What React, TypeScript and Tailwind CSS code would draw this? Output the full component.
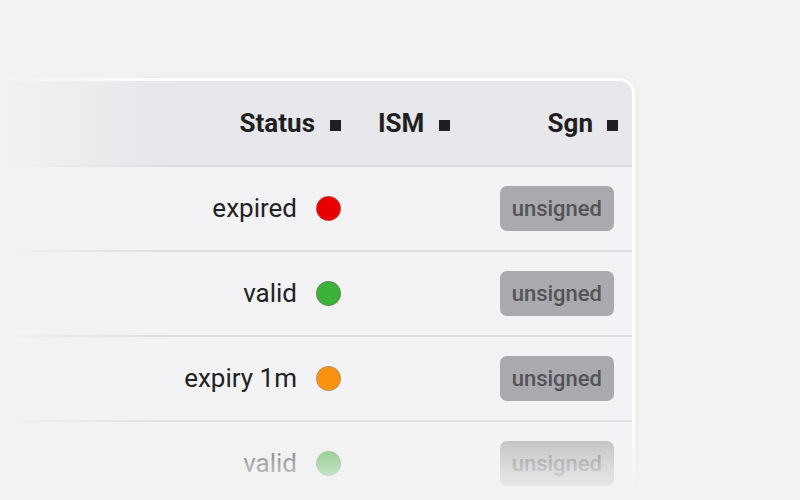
import React from 'react';

const rows = [
  { status: 'expired', dot: 'bg-[#e80000]', ring: 'ring-[#c24a4a]' },
  { status: 'valid', dot: 'bg-[#3bb13a]', ring: 'ring-[#5a8f55]' },
  { status: 'expiry 1m', dot: 'bg-[#fa9010]', ring: 'ring-[#b8926a]' },
  { status: 'valid', dot: 'bg-[#3bb13a]', ring: 'ring-[#5a8f55]' },
];

function SortMark() {
  return <span className="inline-block w-[11px] h-[11px] bg-[#1f1f22] mt-[4px]" />;
}

export default function App() {
  return (
    <div
      className="relative w-[800px] h-[500px] overflow-hidden bg-[#f2f2f2] pt-[78px]"
      style={{ fontFamily: 'Roboto, "Liberation Sans", sans-serif' }}
    >
      <div className="w-[635px] border-t-[3px] border-r-[3px] border-white rounded-tr-[16px] overflow-hidden shadow-[0_0_12px_rgba(0,0,0,0.03)]">
        <div className="grid grid-cols-[352px_108px_172px] h-[86px] bg-[#e7e7ec] border-b-2 border-[#dcdce0] items-center text-[26px] font-bold text-[#1f1f22]">
          <div className="flex items-center justify-end gap-[15px] pr-[11px]">
            <span>Status</span>
            <SortMark />
          </div>
          <div className="flex items-center gap-[15px] pl-[26px]">
            <span>ISM</span>
            <SortMark />
          </div>
          <div className="flex items-center justify-end gap-[14px] pr-[14px]">
            <span>Sgn</span>
            <SortMark />
          </div>
        </div>
        {rows.map((r, i) => (
          <div
            key={i}
            className="grid grid-cols-[352px_108px_172px] h-[85px] bg-[#f3f3f6] border-b-2 border-[#dcdce0] items-center"
          >
            <div className="flex items-center justify-end gap-[20px] pr-[12px] text-[26px] text-[#222225]">
              <span>{r.status}</span>
              <span className={`w-[23px] h-[23px] rounded-full ring-1 ${r.dot} ${r.ring}`} />
            </div>
            <div />
            <div className="flex justify-end pr-[18px]">
              <span className="h-[45px] px-[12px] flex items-center rounded-[7px] bg-[#a9a9ae] text-[22px] font-medium text-[#535358]">
                unsigned
              </span>
            </div>
          </div>
        ))}
      </div>
      <div className="absolute left-0 top-0 bottom-0 w-[170px] bg-gradient-to-r from-[#f2f2f2] via-[#f2f2f2]/50 to-transparent" />
      <div className="absolute left-0 right-0 bottom-0 h-[90px] bg-gradient-to-b from-transparent via-[#f2f2f2]/55 to-[#f2f2f2]" />
    </div>
  );
}
